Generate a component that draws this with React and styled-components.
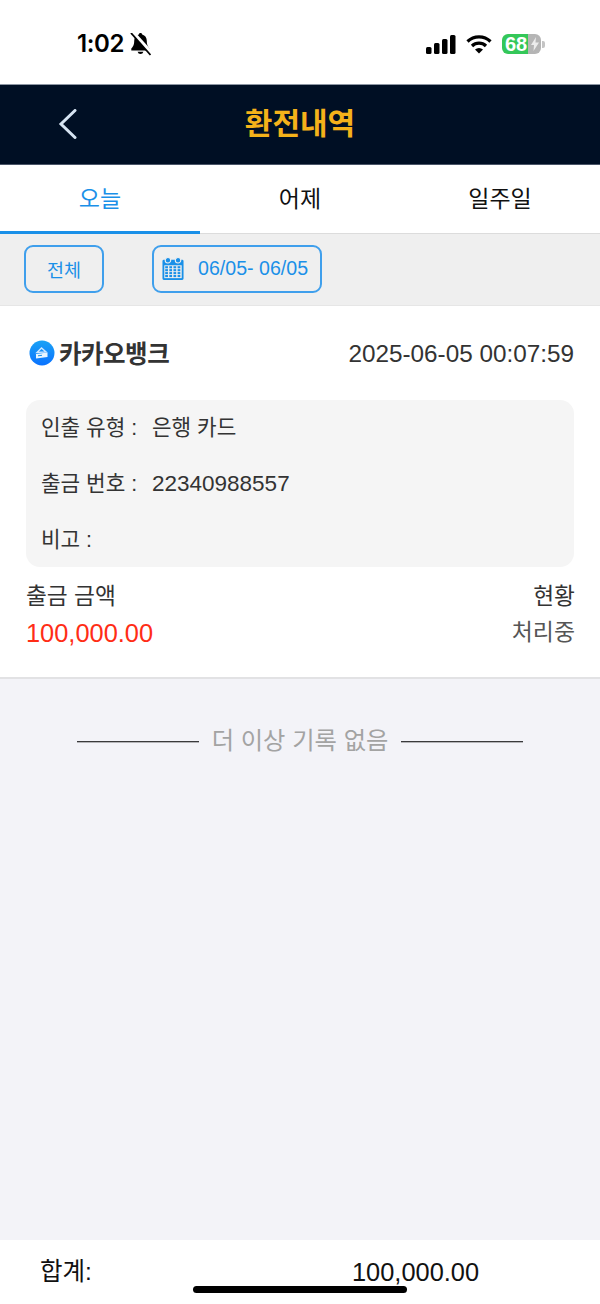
import React from "react";
import styled, { createGlobalStyle } from "styled-components";

const Global = createGlobalStyle`
  html, body { margin: 0; padding: 0; background: #fff; }
  body { font-family: "Liberation Sans", "Noto Sans CJK KR", sans-serif; }
  * { box-sizing: border-box; }
`;
const Page = styled.div`
  position: relative; width: 600px; height: 1304px; display: flex; flex-direction: column;
  background: #f3f3f8; overflow: hidden;
`;
const StatusBar = styled.div`
  height: 85px; flex: none; background: #fff; border-bottom: 1px solid #8d96a3;
  display: flex; justify-content: space-between; align-items: flex-start;
  padding: 30px 55px 0 77px;
`;
const StatusLeft = styled.div`display: flex; align-items: center; gap: 6px; height: 28px;`;
const Time = styled.span`font-size: 24px; line-height: 28px; color: #000; letter-spacing: -0.4px; font-family: "Inter","Liberation Sans",sans-serif; font-weight: 600;`;
const StatusRight = styled.div`display: flex; align-items: center; height: 28px; gap: 10px;`;
const Battery = styled.div`
  position: relative; width: 39px; height: 20px; border-radius: 6px; overflow: hidden;
  background: linear-gradient(90deg, #34c759 0 26px, #b5b5b5 26px);
  display: flex; align-items: center; padding-left: 3px;
  color: #fff; font-size: 20px; font-weight: 700; line-height: 20px;
`;
const BatteryWrap = styled.div`display: flex; align-items: center; gap: 1px;`;
const BatteryCap = styled.div`width: 3px; height: 7px; background: #c4c4c4; border-radius: 0 2px 2px 0;`;
const Bolt = styled.svg`position: absolute; left: 29px; top: 3px;`;
const Header = styled.div`
  height: 80px; flex: none; background: #000f24; border-bottom: 1px solid #4a5568;
  display: flex; align-items: center; justify-content: center; position: relative;
`;
const BackBtn = styled.svg`position: absolute; left: 58px; top: 24px;`;
const Title = styled.h1`margin: 0 0 2px; font-size: 30px; line-height: 40px; font-weight: 700; color: #f5b21a; letter-spacing: 0;`;
const Tabs = styled.div`
  height: 69px; flex: none; background: #fff; display: flex; border-bottom: 1px solid #dcdcdc;
`;
const Tab = styled.div`
  flex: 1; display: flex; align-items: center; justify-content: center; padding-bottom: 3px;
  font-size: 23px; color: ${p => (p.$active ? "#1a90e8" : "#111")};
  border-bottom: 3px solid ${p => (p.$active ? "#1a90e8" : "transparent")};
  margin-bottom: -1px;
`;
const FilterBar = styled.div`
  height: 72px; flex: none; background: #efefef; border-bottom: 1px solid #e6e6e6;
  display: flex; align-items: center; padding: 0 0 2px 24px; gap: 48px;
`;
const AllBtn = styled.div`
  height: 48px; width: 80px; border: 2px solid #3f9fec; border-radius: 9px;
  display: flex; align-items: center; justify-content: center;
  color: #1a90e8; font-size: 18.5px;
`;
const DateBtn = styled.div`
  height: 48px; width: 170px; border: 2px solid #3f9fec; border-radius: 9px;
  display: flex; align-items: center; gap: 14px; padding-left: 8px;
  color: #1a90e8; font-size: 19.6px;
`;
const Card = styled.div`
  height: 373px; flex: none; background: #fff; border-bottom: 2px solid #e2e2e4;
  padding: 27px 26px 0;
`;
const CardTop = styled.div`display: flex; justify-content: space-between; align-items: center; height: 40px; padding-left: 3px;`;
const Bank = styled.div`display: flex; align-items: center; gap: 4px; font-size: 24.5px; font-weight: 700; color: #333; letter-spacing: -0.5px;`;
const BankName = styled.span`margin-bottom: 2px;`;
const Stamp = styled.span`font-size: 24.3px; color: #333; padding-top: 1px;`;
const Details = styled.div`
  margin-top: 27px; height: 167px; background: #f5f5f5; border-radius: 14px;
  padding: 0 15px; display: flex; flex-direction: column;
`;
const DetailRow = styled.div`
  flex: none; display: flex; height: 56px; align-items: baseline; padding-top: 14px;
  font-size: 21.3px; line-height: 28px; color: #333;
`;
const DetailLabel = styled.span`width: 111px; flex: none;`;
const DetailValue = styled.span`font-size: ${p => p.$fs || 21.3}px;`;
const Summary = styled.div`display: flex; justify-content: space-between; margin: 13px -1px 0 0;`;
const Col = styled.div`display: flex; flex-direction: column; align-items: ${p => p.$end ? "flex-end" : "flex-start"}; gap: 5px;`;
const SumLabel = styled.span`font-size: 22.7px; line-height: 32px; color: #333;`;
const Amount = styled.span`font-size: 25.4px; line-height: 32px; color: #ff2d16;`;
const SumState = styled.span`font-size: 22.9px; line-height: 30px; color: #555;`;
const EndNote = styled.div`
  display: flex; align-items: center; justify-content: center; gap: 13px; margin-top: 42px; height: 40px;
  color: #a3a3a3; font-size: 24.3px;
`;
const NoteText = styled.span`margin-bottom: 5px;`;
const Rule = styled.div`width: 122px; height: 1px; background: #3a3a3c; box-shadow: 0 1px 0 #b4b4b8;`;
const Spacer = styled.div`flex: 1;`;
const Footer = styled.div`
  height: 64px; flex: none; background: #fff; display: flex; align-items: flex-start;
  padding: 16px 0 0 40px; line-height: 32px; color: #111;
`;
const TotalLabel = styled.span`width: 312px; font-size: 24.5px;`;
const TotalValue = styled.span`font-size: 25.4px;`;
const HomeBar = styled.div`
  position: absolute; left: 193px; top: 1286px; width: 214px; height: 7px; border-radius: 4px; background: #000;
`;

const Bell = () => (
  <svg width="21" height="23" viewBox="0 0 21 23">
    <path d="M10.500 0C9.500 0 8.900.7 8.800 1.500 5.800 2.300 4.200 4.800 4.200 8c0 4.300-1.400 6-2.900 7.500v2h18.400v-2C18.200 14 16.800 12.300 16.800 8c0-3.200-1.600-5.700-4.600-6.500C12.100.7 11.500 0 10.500 0zM7.600 18.800a3 3 0 0 0 5.800 0z" fill="#000" />
    <path d="M2.500 -1 22 20.500" stroke="#fff" strokeWidth="3.600" />
    <path d="M1 0 20.500 22" stroke="#000" strokeWidth="1.800" />
  </svg>
);
const Signal = () => (
  <svg width="30" height="19" viewBox="0 0 30 19" fill="#000">
    <rect x="0" y="12" width="5.500" height="7" rx="1.500" />
    <rect x="8" y="8" width="5.500" height="11" rx="1.500" />
    <rect x="16" y="4" width="5.500" height="15" rx="1.500" />
    <rect x="24" y="0" width="5.500" height="19" rx="1.500" />
  </svg>
);
const Wifi = () => (
  <svg width="26" height="19" viewBox="0 0 26 19" fill="none" stroke="#000" strokeWidth="3.200">
    <path d="M1.500 6.500a16.500 16.500 0 0 1 23 0" />
    <path d="M6 11a10 10 0 0 1 14 0" />
    <path d="M13 18.500 9 14.500a6 6 0 0 1 8 0z" fill="#000" stroke="none" />
  </svg>
);
const Calendar = () => (
  <svg width="22" height="25" viewBox="0 0 24 26">
    <path d="M2 3.500h20a1.500 1.500 0 0 1 1.500 1.500v19a1.500 1.500 0 0 1-1.500 1.500H2A1.500 1.500 0 0 1 .5 24V5A1.500 1.500 0 0 1 2 3.500z" fill="#1a90e8" />
    <circle cx="6.500" cy="4" r="3" fill="#1a90e8" stroke="#efefef" strokeWidth="1.200" />
    <circle cx="17.500" cy="4" r="3" fill="#1a90e8" stroke="#efefef" strokeWidth="1.200" />
    <rect x="2.500" y="9.500" width="19" height="14" fill="#efefef" />
    {[0, 1, 2, 3].map(r => [0, 1, 2, 3].map(c => (
      <rect key={`${r}${c}`} x={3.500 + c * 4.500} y={10.500 + r * 3.200} width="3" height="2.300" fill="#1a90e8" />
    )))}
  </svg>
);
const BankLogo = () => (
  <svg width="26" height="26" viewBox="0 0 26 26">
    <defs>
      <linearGradient id="bl" x1="0" y1="0" x2="0" y2="1">
        <stop offset="0" stopColor="#1aa2f5" />
        <stop offset="1" stopColor="#0a72ff" />
      </linearGradient>
    </defs>
    <circle cx="13" cy="13" r="12.500" fill="url(#bl)" />
    <path d="M8 12.500 12.500 8l4.500 4z" fill="none" stroke="#cfe8ff" strokeWidth="1.400" />
    <path d="M7 14 18.500 12.500V17L7 18.500z" fill="#e8f5ff" />
    <path d="M9 15.800 13 15.300" stroke="#1a90e8" strokeWidth="1" />
  </svg>
);

export default function App() {
  return (
    <Page>
      <Global />
      <StatusBar>
        <StatusLeft><Time>1:02</Time><Bell /></StatusLeft>
        <StatusRight>
          <Signal />
          <Wifi />
          <BatteryWrap>
            <Battery>
              68
              <Bolt width="8" height="14" viewBox="0 0 8 14"><path d="M5 0 0 8h3L2.500 14 8 5.500H4.500z" fill="#ececec" /></Bolt>
            </Battery>
            <BatteryCap />
          </BatteryWrap>
        </StatusRight>
      </StatusBar>
      <Header>
        <BackBtn width="20" height="30" viewBox="0 0 20 30" fill="none" stroke="#d6e4f2" strokeWidth="3" strokeLinecap="round">
          <path d="M17 1.500 3 15l14 13.500" />
        </BackBtn>
        <Title>환전내역</Title>
      </Header>
      <Tabs>
        <Tab $active>오늘</Tab>
        <Tab>어제</Tab>
        <Tab>일주일</Tab>
      </Tabs>
      <FilterBar>
        <AllBtn>전체</AllBtn>
        <DateBtn><Calendar />06/05- 06/05</DateBtn>
      </FilterBar>
      <Card>
        <CardTop>
          <Bank><BankLogo /><BankName>카카오뱅크</BankName></Bank>
          <Stamp>2025-06-05 00:07:59</Stamp>
        </CardTop>
        <Details>
          <DetailRow><DetailLabel>인출 유형 :</DetailLabel><DetailValue>은행 카드</DetailValue></DetailRow>
          <DetailRow><DetailLabel>출금 번호 :</DetailLabel><DetailValue $fs={22.5}>22340988557</DetailValue></DetailRow>
          <DetailRow><DetailLabel>비고 :</DetailLabel></DetailRow>
        </Details>
        <Summary>
          <Col><SumLabel>출금 금액</SumLabel><Amount>100,000.00</Amount></Col>
          <Col $end><SumLabel>현황</SumLabel><SumState>처리중</SumState></Col>
        </Summary>
      </Card>
      <EndNote><Rule /><NoteText>더 이상 기록 없음</NoteText><Rule /></EndNote>
      <Spacer />
      <Footer><TotalLabel>합계:</TotalLabel><TotalValue>100,000.00</TotalValue></Footer>
      <HomeBar />
    </Page>
  );
}
